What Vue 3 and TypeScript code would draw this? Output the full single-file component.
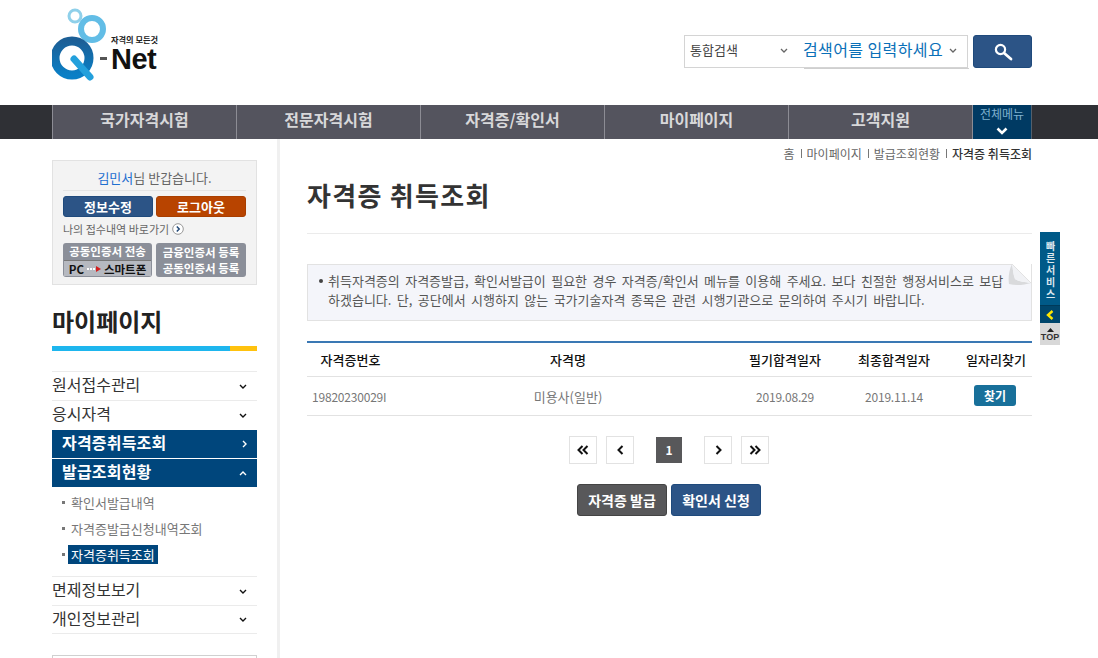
<script setup lang="ts">
const navItems = ["국가자격시험", "전문자격시험", "자격증/확인서", "마이페이지", "고객지원"];
const crumbs = ["홈", "마이페이지", "발급조회현황"];
const heads = ["자격증번호", "자격명", "필기합격일자", "최종합격일자", "일자리찾기"];
const subMenu = ["확인서발급내역", "자격증발급신청내역조회", "자격증취득조회"];
</script>

<template>
  <div class="page">
    <header class="top">
      <svg class="logo" width="110" height="76" viewBox="0 0 110 76">
        <defs>
          <linearGradient id="qring" x1="0" y1="0" x2="0" y2="1">
            <stop offset="0" stop-color="#1c5f96" />
            <stop offset="1" stop-color="#0a7fc6" />
          </linearGradient>
        </defs>
        <circle cx="23" cy="8" r="6" fill="none" stroke="#8fd0ea" stroke-width="3" />
        <circle cx="40" cy="21" r="11" fill="none" stroke="#62bde6" stroke-width="6" />
        <circle cx="20" cy="50" r="17" fill="none" stroke="url(#qring)" stroke-width="9" />
        <line x1="22" y1="51" x2="38" y2="69" stroke="#23a0dc" stroke-width="7" stroke-linecap="round" />
        <rect x="48" y="49" width="7" height="3" fill="#555" />
        <text x="59" y="35" class="logo-small">자격의 모든것</text>
        <text x="59" y="61" class="logo-net">Net</text>
      </svg>
      <div class="search">
        <div class="search-box">
          <div class="search-type">
            <span>통합검색</span>
            <svg width="8" height="5" viewBox="0 0 8 5"><path d="M1 1l3 3 3-3" fill="none" stroke="#666" stroke-width="1.3" /></svg>
          </div>
          <div class="search-input">
            <span>검색어를 입력하세요</span>
            <svg width="8" height="5" viewBox="0 0 8 5"><path d="M1 1l3 3 3-3" fill="none" stroke="#666" stroke-width="1.3" /></svg>
          </div>
        </div>
        <button class="search-btn">
          <svg width="20" height="20" viewBox="0 0 20 20">
            <circle cx="7.5" cy="7.5" r="4.6" fill="none" stroke="#fff" stroke-width="2.2" />
            <line x1="11" y1="11" x2="18" y2="17" stroke="#fff" stroke-width="2.8" stroke-linecap="round" />
          </svg>
        </button>
      </div>
    </header>

    <nav class="gnb">
      <a v-for="item in navItems" :key="item" class="gnb-item">{{ item }}</a>
      <a class="gnb-all">
        <span>전체메뉴</span>
        <svg width="12" height="8" viewBox="0 0 12 8"><path d="M1.5 1.5L6 6l4.5-4.5" fill="none" stroke="#fff" stroke-width="2.6" /></svg>
      </a>
    </nav>

    <div class="body">
      <aside class="side">
        <div class="login-box">
          <p class="hello"><b>김민서</b>님 반갑습니다.</p>
          <div class="login-btns">
            <button class="btn-info">정보수정</button>
            <button class="btn-logout">로그아웃</button>
          </div>
          <p class="shortcut">
            나의 접수내역 바로가기
            <svg width="12" height="12" viewBox="0 0 12 12">
              <circle cx="6" cy="6" r="5.3" fill="#fff" stroke="#999" />
              <path d="M4.8 3.5L7.2 6l-2.4 2.5" fill="none" stroke="#234a78" stroke-width="1.5" />
            </svg>
          </p>
          <div class="cert-btns">
            <div class="cert">
              <span class="cert-top">공동인증서 전송</span>
              <span class="cert-bottom">
                <em>PC</em>
                <svg width="14" height="6" viewBox="0 0 14 6">
                  <path d="M0 3h9" stroke="#fff" stroke-width="2" stroke-dasharray="2 1" />
                  <path d="M9 0l5 3-5 3z" fill="#d3201f" />
                </svg>
                스마트폰
              </span>
            </div>
            <div class="cert cert-two">
              <span>금융인증서 등록</span>
              <span>공동인증서 등록</span>
            </div>
          </div>
        </div>

        <h2 class="side-title">마이페이지</h2>
        <div class="side-bar"><i></i></div>

        <ul class="menu">
          <li class="menu-row">
            <span>원서접수관리</span>
            <svg width="8" height="5" viewBox="0 0 8 5"><path d="M1 1l3 3 3-3" fill="none" stroke="#111" stroke-width="1.4" /></svg>
          </li>
          <li class="menu-row">
            <span>응시자격</span>
            <svg width="8" height="5" viewBox="0 0 8 5"><path d="M1 1l3 3 3-3" fill="none" stroke="#111" stroke-width="1.4" /></svg>
          </li>
          <li class="menu-row active">
            <span>자격증취득조회</span>
            <svg width="5" height="8" viewBox="0 0 5 8"><path d="M1 1l3 3-3 3" fill="none" stroke="#fff" stroke-width="1.4" /></svg>
          </li>
          <li class="menu-row active">
            <span>발급조회현황</span>
            <svg width="8" height="5" viewBox="0 0 8 5"><path d="M1 4l3-3 3 3" fill="none" stroke="#fff" stroke-width="1.4" /></svg>
          </li>
          <li class="sub">
            <a v-for="(s, i) in subMenu" :key="s" class="sub-item" :class="{ on: i === 2 }"><span>{{ s }}</span></a>
          </li>
          <li class="menu-row">
            <span>면제정보보기</span>
            <svg width="8" height="5" viewBox="0 0 8 5"><path d="M1 1l3 3 3-3" fill="none" stroke="#111" stroke-width="1.4" /></svg>
          </li>
          <li class="menu-row">
            <span>개인정보관리</span>
            <svg width="8" height="5" viewBox="0 0 8 5"><path d="M1 1l3 3 3-3" fill="none" stroke="#111" stroke-width="1.4" /></svg>
          </li>
        </ul>
        <div class="side-banner"></div>
      </aside>

      <main class="main">
        <div class="crumbs">
          <template v-for="c in crumbs" :key="c"><span>{{ c }}</span><i></i></template>
          <strong>자격증 취득조회</strong>
        </div>
        <h1 class="title">자격증 취득조회</h1>

        <div class="notice">
          <p>취득자격증의 자격증발급, 확인서발급이 필요한 경우 자격증/확인서 메뉴를 이용해 주세요. 보다 친절한 행정서비스로 보답하겠습니다. 단, 공단에서 시행하지 않는 국가기술자격 종목은 관련 시행기관으로 문의하여 주시기 바랍니다.</p>
          <svg class="fold" width="24" height="24" viewBox="0 0 24 24">
            <path d="M4 0L23 19V0z" fill="#fff" />
            <path d="M4 0C1 6 0 14 1 20C8 22 16 21 23 19C16 18 9 17 7 15C5 10 5 5 4 0z" fill="#d9dadc" />
            <path d="M4 0L23 19C16 18 9 17 7 15C5 10 5 5 4 0z" fill="#f1f2f5" />
            <path d="M4 0L23 19" stroke="#e2e2e2" fill="none" />
          </svg>
        </div>

        <div class="table">
          <div class="row head">
            <div v-for="h in heads" :key="h">{{ h }}</div>
          </div>
          <div class="row data">
            <div class="left">19820230029I</div>
            <div class="name">미용사(일반)</div>
            <div>2019.08.29</div>
            <div>2019.11.14</div>
            <div><button class="find">찾기</button></div>
          </div>
        </div>

        <div class="paging">
          <a class="pg">
            <svg width="12" height="10" viewBox="0 0 12 10"><path d="M5.5 1L1.5 5l4 4M10.5 1l-4 4 4 4" fill="none" stroke="#111" stroke-width="2" /></svg>
          </a>
          <a class="pg">
            <svg width="7" height="10" viewBox="0 0 7 10"><path d="M5.5 1L1.5 5l4 4" fill="none" stroke="#111" stroke-width="2" /></svg>
          </a>
          <span class="pg-cur">1</span>
          <a class="pg">
            <svg width="7" height="10" viewBox="0 0 7 10"><path d="M1.5 1l4 4-4 4" fill="none" stroke="#111" stroke-width="2" /></svg>
          </a>
          <a class="pg">
            <svg width="12" height="10" viewBox="0 0 12 10"><path d="M1.5 1l4 4-4 4M6.5 1l4 4-4 4" fill="none" stroke="#111" stroke-width="2" /></svg>
          </a>
        </div>

        <div class="actions">
          <button class="act gray">자격증 발급</button>
          <button class="act blue">확인서 신청</button>
        </div>
      </main>
    </div>

    <div class="quick">
      <div class="quick-text"><span>빠른서비스</span></div>
      <div class="quick-arrow">
        <svg width="8" height="10" viewBox="0 0 8 10"><path d="M6.5 1L2 5l4.5 4" fill="none" stroke="#ffe600" stroke-width="2.4" /></svg>
      </div>
      <div class="quick-top">
        <svg width="7" height="4" viewBox="0 0 7 4"><path d="M3.5 0L7 4H0z" fill="#222" /></svg>
        <span>TOP</span>
      </div>
    </div>
  </div>
</template>

<style>
html, body {
  margin: 0;
  background: #fff;
  overflow: hidden;
}
</style>

<style scoped>
.page {
  position: relative;
  width: 1098px;
  height: 658px;
  overflow: hidden;
  font-family: "Noto Sans CJK KR", "Noto Sans", sans-serif;
  color: #333;
}
button {
  border: 0;
  padding: 0;
  font-family: inherit;
  cursor: pointer;
}
p, h1, h2, ul {
  margin: 0;
  padding: 0;
}
li {
  list-style: none;
}

.top {
  height: 105px;
  display: flex;
  justify-content: space-between;
  padding: 8px 66px 0 52px;
  box-sizing: border-box;
}
.logo-small {
  font-size: 8.2px;
  font-weight: 700;
  fill: #222;
}
.logo-net {
  font-family: "Liberation Sans", sans-serif;
  font-size: 29px;
  font-weight: 700;
  fill: #111;
  letter-spacing: -0.5px;
}
.search {
  display: flex;
  gap: 5px;
  margin-top: 27px;
  height: 33px;
}
.search-box {
  position: relative;
  width: 284px;
  height: 33px;
  box-sizing: border-box;
  border: 1px solid #d4d4d4;
  display: flex;
  align-items: center;
}
.search-box::after {
  content: "";
  position: absolute;
  left: 119px;
  right: -2px;
  bottom: -2px;
  height: 1px;
  background: #cfcfcf;
}
.search-type {
  width: 113px;
  padding: 0 10px 5px 5px;
  box-sizing: border-box;
  display: flex;
  justify-content: space-between;
  align-items: center;
  font-size: 13px;
  color: #444;
}
.search-type svg,
.search-input svg {
  margin-top: 3px;
}
.search-input {
  flex: 1;
  padding: 0 10px 5px 5px;
  display: flex;
  justify-content: space-between;
  align-items: center;
  font-size: 16px;
  letter-spacing: 0.4px;
  color: #0a70b8;
  white-space: nowrap;
}
.search-btn {
  width: 59px;
  height: 33px;
  background: #2c5486;
  border: 1px solid #1f4a7c;
  border-radius: 3px;
  display: flex;
  align-items: center;
  justify-content: center;
}

.gnb {
  height: 34px;
  background: #2f3035;
  display: flex;
  padding-left: 52px;
}
.gnb-item {
  width: 184px;
  box-sizing: border-box;
  background: #54545e;
  border-left: 1px solid #8c8c94;
  color: #d8d8da;
  font-size: 16px;
  font-weight: 700;
  text-align: center;
  line-height: 29px;
}
.gnb-all {
  width: 60px;
  box-sizing: border-box;
  background: #003a63;
  border-left: 1px solid #8c8c94;
  border-right: 1px solid #54606c;
  display: flex;
  flex-direction: column;
  align-items: center;
  color: #7fb1cf;
  font-size: 12px;
  line-height: 18px;
}
.gnb-all svg {
  margin-top: 4px;
}

.body {
  display: flex;
}
.side {
  width: 228px;
  margin-left: 52px;
  padding-top: 21px;
  box-sizing: border-box;
  height: 519px;
  border-right: 3px solid #f0f0f0;
}
.login-box {
  width: 205px;
  height: 125px;
  box-sizing: border-box;
  background: #f3f3f3;
  border: 1px solid #e2e2e2;
  padding: 7px 10px 0;
}
.hello {
  text-align: center;
  font-size: 13px;
  line-height: 20px;
  color: #666;
  padding-bottom: 2px;
  border-bottom: 1px solid #e4e4e4;
}
.hello b {
  font-weight: 400;
  color: #1f6fd0;
}
.login-btns {
  display: flex;
  justify-content: space-between;
  margin-top: 5px;
}
.login-btns button {
  width: 90px;
  height: 21px;
  border-radius: 3px;
  color: #fff;
  font-size: 13px;
  font-weight: 700;
  line-height: 18px;
}
.btn-info {
  background: #2c5486;
  border: 1px solid #1f4a7c;
}
.btn-logout {
  background: #b84400;
  border: 1px solid #a83e00;
}
.shortcut {
  margin-top: 4px;
  font-size: 11px;
  line-height: 16px;
  color: #666;
  display: flex;
  align-items: center;
  gap: 3px;
  white-space: nowrap;
}
.cert-btns {
  display: flex;
  justify-content: space-between;
  margin-top: 6px;
}
.cert {
  width: 89px;
  height: 34px;
  box-sizing: border-box;
  border-radius: 3px;
  background: #8b8f99;
  overflow: hidden;
  display: flex;
  flex-direction: column;
  color: #fff;
  font-size: 11.5px;
  font-weight: 700;
  text-align: center;
  white-space: nowrap;
}
.cert-top {
  height: 18px;
  line-height: 17px;
}
.cert-bottom {
  height: 16px;
  margin: 0 1px 1px;
  background: #b6b9c0;
  border-top: 1px solid #777;
  color: #111;
  display: flex;
  align-items: center;
  justify-content: center;
  gap: 3px;
  line-height: 14px;
  box-sizing: border-box;
}
.cert-bottom em {
  font-style: normal;
}
.cert-two {
  width: 90px;
  line-height: 16px;
  padding-top: 1px;
}

.side-title {
  margin-top: 20px;
  font-size: 24px;
  font-weight: 700;
  color: #222;
  line-height: 32px;
}
.side-bar {
  width: 205px;
  height: 5px;
  margin-top: 9px;
  background: #1eb6ee;
  display: flex;
  justify-content: flex-end;
}
.side-bar i {
  width: 27px;
  background: #ffc20e;
}
.menu {
  width: 205px;
  margin-top: 20px;
}
.menu-row {
  height: 29px;
  box-sizing: border-box;
  border-top: 1px solid #ebebeb;
  display: flex;
  justify-content: space-between;
  align-items: center;
  padding: 0 10px 4px 0;
  font-size: 16px;
  color: #333;
}
.menu-row svg {
  margin-top: 4px;
}
.menu-row.active {
  background: #00467c;
  border-top: 1px solid #fff;
  color: #fff;
  font-weight: 700;
  letter-spacing: 0.2px;
  padding-left: 10px;
}
.sub {
  padding: 2px 0 9px;
}
.sub-item {
  display: flex;
  align-items: center;
  height: 26px;
  padding-left: 10px;
  font-size: 13px;
  color: #777;
}
.sub-item::before {
  content: "";
  width: 3px;
  height: 3px;
  background: #777;
  margin-right: 6px;
}
.sub-item span {
  line-height: 19px;
}
.sub-item.on span {
  background: #00467c;
  color: #fff;
  padding: 0 3px;
  margin-left: -3px;
}
.menu li:last-of-type {
  border-bottom: 1px solid #ebebeb;
}
.side-banner {
  width: 205px;
  height: 10px;
  box-sizing: border-box;
  margin-top: 21px;
  border: 1px solid #d0d0d0;
}

.main {
  width: 725px;
  margin-left: 27px;
}
.crumbs {
  display: flex;
  justify-content: flex-end;
  align-items: center;
  height: 28px;
  font-size: 12px;
  color: #666;
  white-space: nowrap;
}
.crumbs i {
  width: 1px;
  height: 9px;
  background: #777;
  margin: 1px 5px 0 6px;
}
.crumbs strong {
  font-weight: 500;
  color: #333;
}
.title {
  margin-top: 10px;
  font-size: 26px;
  letter-spacing: 1.3px;
  font-weight: 700;
  color: #333;
  line-height: 36px;
  padding-bottom: 20px;
  border-bottom: 1px solid #ebebeb;
}
.notice {
  position: relative;
  margin-top: 30px;
  height: 57px;
  box-sizing: border-box;
  background: #f4f5fa;
  border: 1px solid #e2e2e2;
  padding: 6px 20px 0 20px;
  font-size: 13px;
  word-spacing: 2.5px;
  line-height: 19px;
  color: #555;
}
.notice p {
  position: relative;
}
.notice p::before {
  content: "";
  position: absolute;
  left: -9px;
  top: 8px;
  width: 4px;
  height: 4px;
  border-radius: 50%;
  background: #444;
}
.fold {
  position: absolute;
  right: -1px;
  top: -1px;
}

.table {
  margin-top: 20px;
  border-top: 2px solid #3a78b4;
}
.row {
  display: grid;
  grid-template-columns: 87px 348px 86px 132px 72px;
  box-sizing: border-box;
  text-align: center;
  align-items: center;
  white-space: nowrap;
}
.head {
  height: 34px;
  border-bottom: 1px solid #e2e2e2;
  font-size: 13px;
  font-weight: 500;
  color: #111;
}
.data {
  height: 39px;
  border-bottom: 1px solid #e2e2e2;
  font-size: 12px;
  letter-spacing: -0.2px;
  color: #777;
}
.name {
  font-size: 13px;
  letter-spacing: 0;
}
.left {
  text-align: left;
  padding-left: 5px;
}
.find {
  display: block;
  width: 42px;
  height: 21px;
  margin: 0 auto 1px 14px;
  border-radius: 3px;
  background: #18709a;
  color: #fff;
  font-size: 12px;
  font-weight: 700;
  line-height: 19px;
}

.paging {
  margin-top: 20px;
  padding-right: 1px;
  display: flex;
  justify-content: center;
  gap: 9px;
}
.pg {
  width: 28px;
  height: 28px;
  box-sizing: border-box;
  border: 1px solid #e2e2e2;
  display: flex;
  align-items: center;
  justify-content: center;
}
.pg-cur {
  width: 26px;
  height: 26px;
  margin: 1px 13px 0;
  background: #58585a;
  color: #fff;
  font-size: 12px;
  font-weight: 700;
  text-align: center;
  line-height: 26px;
}
.actions {
  margin-top: 20px;
  padding-right: 1px;
  display: flex;
  justify-content: center;
  gap: 4px;
}
.act {
  width: 90px;
  height: 32px;
  border-radius: 3px;
  color: #fff;
  font-size: 14px;
  font-weight: 700;
  white-space: nowrap;
}
.gray {
  background: #58585a;
  border: 1px solid #444;
}
.blue {
  background: #2c5486;
  border: 1px solid #1f4a7c;
}

.quick {
  position: absolute;
  left: 1040px;
  top: 232px;
  width: 20px;
}
.quick-text {
  height: 73px;
  box-sizing: border-box;
  background: #005a88;
  color: #dbe7ee;
  font-size: 10px;
  font-weight: 700;
  padding-top: 9px;
  display: flex;
  justify-content: center;
}
.quick-text span {
  writing-mode: vertical-rl;
  text-orientation: upright;
  letter-spacing: 2px;
  line-height: 20px;
}
.quick-arrow {
  height: 18px;
  box-sizing: border-box;
  background: #00466c;
  border-top: 1px solid #003a5a;
  display: flex;
  align-items: center;
  justify-content: center;
}
.quick-top {
  height: 22px;
  background: #d8d8d8;
  display: flex;
  flex-direction: column;
  align-items: center;
  padding-top: 5px;
  box-sizing: border-box;
  color: #333;
  font-family: "Liberation Sans", sans-serif;
  font-size: 9px;
  font-weight: 700;
  line-height: 10px;
}
</style>
